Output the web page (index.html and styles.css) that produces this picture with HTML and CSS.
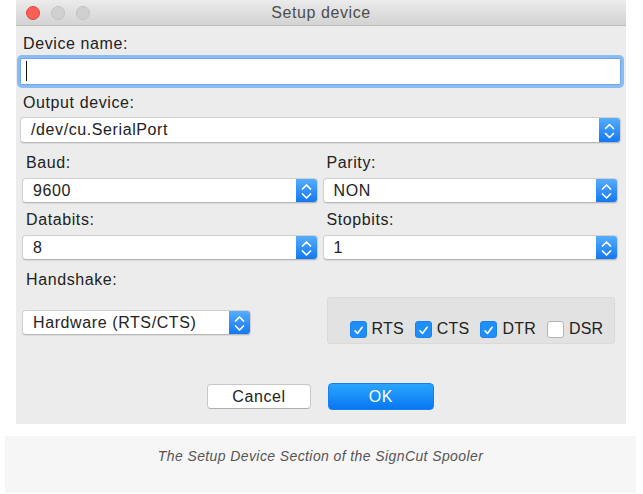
FILE: index.html
```html
<!DOCTYPE html>
<html lang="en">
<head>
    <meta charset="utf8"/>
    <title>Setup device</title>
    <link rel="stylesheet" href="styles.css">
</head>
<body>
<div class="window">
    <div class="titlebar">
        <div class="lights">
            <span class="light close"></span>
            <span class="light"></span>
            <span class="light"></span>
        </div>
        <div class="title">Setup device</div>
        <div></div>
    </div>

    <div class="form">
        <div class="lbl top">Device name:</div>
        <div class="input"><span class="caret"></span></div>

        <div class="lbl top out">Output device:</div>
        <div class="select wide">
            <span class="value">/dev/cu.SerialPort</span>
            <span class="stepper"><svg width="21" height="26" viewBox="0 0 21 26"><path d="M6.5 10.5 L10.5 6.5 L14.5 10.5 M6.5 15.5 L10.5 19.5 L14.5 15.5" fill="none" stroke="#fff" stroke-width="1.7" stroke-linecap="round" stroke-linejoin="round"/></svg></span>
        </div>

        <div class="grid">
            <div class="cell">
                <div class="lbl">Baud:</div>
                <div class="select">
                    <span class="value">9600</span>
                    <span class="stepper"><svg width="21" height="25" viewBox="0 0 21 25"><path d="M6.5 10 L10.5 6 L14.5 10 M6.5 15 L10.5 19 L14.5 15" fill="none" stroke="#fff" stroke-width="1.7" stroke-linecap="round" stroke-linejoin="round"/></svg></span>
                </div>
            </div>
            <div class="cell">
                <div class="lbl">Parity:</div>
                <div class="select">
                    <span class="value">NON</span>
                    <span class="stepper"><svg width="21" height="25" viewBox="0 0 21 25"><path d="M6.5 10 L10.5 6 L14.5 10 M6.5 15 L10.5 19 L14.5 15" fill="none" stroke="#fff" stroke-width="1.7" stroke-linecap="round" stroke-linejoin="round"/></svg></span>
                </div>
            </div>
            <div class="cell">
                <div class="lbl">Databits:</div>
                <div class="select">
                    <span class="value">8</span>
                    <span class="stepper"><svg width="21" height="25" viewBox="0 0 21 25"><path d="M6.5 10 L10.5 6 L14.5 10 M6.5 15 L10.5 19 L14.5 15" fill="none" stroke="#fff" stroke-width="1.7" stroke-linecap="round" stroke-linejoin="round"/></svg></span>
                </div>
            </div>
            <div class="cell">
                <div class="lbl">Stopbits:</div>
                <div class="select">
                    <span class="value">1</span>
                    <span class="stepper"><svg width="21" height="25" viewBox="0 0 21 25"><path d="M6.5 10 L10.5 6 L14.5 10 M6.5 15 L10.5 19 L14.5 15" fill="none" stroke="#fff" stroke-width="1.7" stroke-linecap="round" stroke-linejoin="round"/></svg></span>
                </div>
            </div>
        </div>

        <div class="grid hs">
            <div class="cell">
                <div class="lbl">Handshake:</div>
                <div class="select short">
                    <span class="value">Hardware (RTS/CTS)</span>
                    <span class="stepper"><svg width="21" height="25" viewBox="0 0 21 25"><path d="M6.5 10 L10.5 6 L14.5 10 M6.5 15 L10.5 19 L14.5 15" fill="none" stroke="#fff" stroke-width="1.7" stroke-linecap="round" stroke-linejoin="round"/></svg></span>
                </div>
            </div>
            <div class="group">
                <div class="check"><span class="box on"><svg width="17" height="17" viewBox="0 0 17 17"><path d="M4.5 8.8 L7.3 11.8 L12.6 4.8" fill="none" stroke="#fff" stroke-width="1.8" stroke-linecap="round" stroke-linejoin="round"/></svg></span>RTS</div>
                <div class="check"><span class="box on"><svg width="17" height="17" viewBox="0 0 17 17"><path d="M4.5 8.8 L7.3 11.8 L12.6 4.8" fill="none" stroke="#fff" stroke-width="1.8" stroke-linecap="round" stroke-linejoin="round"/></svg></span>CTS</div>
                <div class="check"><span class="box on"><svg width="17" height="17" viewBox="0 0 17 17"><path d="M4.5 8.8 L7.3 11.8 L12.6 4.8" fill="none" stroke="#fff" stroke-width="1.8" stroke-linecap="round" stroke-linejoin="round"/></svg></span>DTR</div>
                <div class="check"><span class="box"></span>DSR</div>
            </div>
        </div>

        <div class="buttons">
            <button class="btn cancel">Cancel</button>
            <button class="btn ok">OK</button>
        </div>
    </div>
</div>

<div class="caption">The Setup Device Section of the SignCut Spooler</div>
</body>
</html>
```

FILE: styles.css
```css
* {
    box-sizing: border-box;
}

body {
    margin: 0;
    background: #fff;
    font-family: "Liberation Sans", Arial, sans-serif;
    font-size: 16px;
    letter-spacing: 0.6px;
    color: #222;
}

.window {
    width: 610px;
    height: 424px;
    margin-left: 16px;
    background: #ececec;
    display: flex;
    flex-direction: column;
}

.titlebar {
    flex: none;
    height: 26px;
    background: linear-gradient(#ebebeb, #d3d3d3);
    border-bottom: 1px solid #bcbcbc;
    display: grid;
    grid-template-columns: 1fr auto 1fr;
    align-items: center;
}

.lights {
    display: flex;
    gap: 11px;
    padding-left: 10px;
}

.light {
    width: 14px;
    height: 14px;
    border-radius: 50%;
    background: #d0d0d0;
    border: 1px solid #c2c2c2;
}

.light.close {
    background: #fc5f57;
    border-color: #e5453f;
}

.title {
    color: #4d4d4d;
    padding-top: 1px;
}

.form {
    padding: 9px 5px 0 4px;
}

.lbl {
    line-height: 18px;
    padding-left: 4px;
}

.lbl.top {
    padding-left: 3px;
}

.lbl.out {
    margin-top: 9px;
}

.input {
    margin-top: 5px;
    height: 27px;
    background: #fff;
    border: 1px solid #6ea8ea;
    border-radius: 2px;
    box-shadow: 0 0 0 3px #88bcf2;
    padding: 2px 0 0 5px;
}

.caret {
    display: block;
    width: 1px;
    height: 20px;
    background: #111;
}

.select {
    margin-top: 6px;
    height: 25px;
    display: flex;
    align-items: center;
    background: #fff;
    border: 1px solid #d0d0d0;
    border-bottom-color: #b8b8b8;
    border-radius: 4px;
    overflow: hidden;
    box-shadow: 0 1px 1px rgba(0, 0, 0, 0.08);
}

.select.wide {
    margin-top: 5px;
    height: 26px;
}

.select.short {
    width: 229px;
    margin-top: 21px;
}

.value {
    flex: 1;
    padding-left: 10px;
    white-space: nowrap;
}

.stepper {
    flex: none;
    width: 21px;
    height: 100%;
    display: flex;
    background: linear-gradient(#55adfd, #1378f3);
}

.grid {
    margin: 11px 3px 0 2px;
    display: grid;
    grid-template-columns: 1fr 1fr;
    column-gap: 5px;
    row-gap: 8px;
}

.grid.hs {
    margin-top: 11px;
}

.group {
    margin: 26px 3px 0 4px;
    height: 47px;
    background: #e2e2e2;
    border: 1px solid #dadada;
    border-radius: 3px;
    display: flex;
    align-items: flex-end;
    gap: 11px;
    padding: 0 0 5px 22px;
    letter-spacing: 0.2px;
}

.check {
    display: flex;
    align-items: center;
    gap: 5px;
    line-height: 18px;
}

.box {
    width: 17px;
    height: 17px;
    border-radius: 3px;
    background: #fff;
    border: 1px solid #b4b4b4;
    display: flex;
}

.box.on {
    background: #1e8ef9;
    border-color: #1a82ec;
}

.buttons {
    margin-top: 39px;
    display: flex;
    justify-content: center;
    align-items: center;
    gap: 17px;
}

.btn {
    font-family: "Liberation Sans", Arial, sans-serif;
    font-size: 16px;
    letter-spacing: 0.6px;
    padding: 0;
    border-radius: 4px;
}

.cancel {
    width: 104px;
    height: 25px;
    background: #fff;
    color: #222;
    border: 1px solid #c8c8c8;
    border-bottom-color: #adadad;
}

.ok {
    width: 106px;
    height: 27px;
    background: linear-gradient(#2aa5ff, #0877f2);
    color: #fff;
    border: 1px solid #1a7fe8;
}

.caption {
    margin: 12px 0 0 5px;
    width: 631px;
    height: 57px;
    background: #f6f6f6;
    text-align: center;
    padding-top: 12px;
    font-size: 14px;
    line-height: 16px;
    letter-spacing: 0.4px;
    font-style: italic;
    color: #555;
}
```
